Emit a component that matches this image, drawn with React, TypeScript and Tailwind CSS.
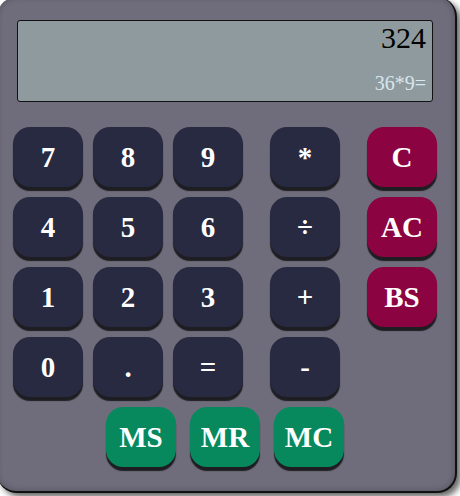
import React, { useState } from 'react';

const digitKeys = ['7', '8', '9', '4', '5', '6', '1', '2', '3', '0', '.', '='];
const opKeys = ['*', '÷', '+', '-'];
const clearKeys = ['C', 'AC', 'BS'];
const memKeys = ['MS', 'MR', 'MC'];

function Key({ label, tone }: { label: string; tone: 'dark' | 'red' | 'green' }) {
  const bg =
    tone === 'red' ? 'bg-[#8b0340]' : tone === 'green' ? 'bg-[#07895d]' : 'bg-[#272a41]';
  return (
    <button
      className={`${bg} w-[70px] h-[60px] rounded-[17px] shadow-[0_4px_1px_#1e1e22] text-white font-bold text-[29px] leading-none flex items-center justify-center font-['Liberation_Serif','Times_New_Roman',serif]`}
    >
      {label}
    </button>
  );
}

export default function App() {
  const [result] = useState('324');
  const [expr] = useState('36*9=');

  return (
    <div className="w-[460px] h-[496px] overflow-hidden bg-white">
      <div className="-ml-[3px] -mt-[3px] w-[460px] h-[496px] rounded-[20px] bg-[#6f6c7b] border-r-2 border-b-2 border-[#111] shadow-[4px_4px_6px_rgba(0,0,0,0.6),inset_0_0_6px_rgba(0,0,0,0.25)] flex flex-col font-['Liberation_Serif','Times_New_Roman',serif]">
        <div className="ml-[20px] mt-[23px] w-[416px] h-[82px] bg-[#8e9a9d] border border-[#111] rounded-[3px] flex flex-col items-end pr-[6px]">
          <div className="text-[30px] leading-[34px] text-black">{result}</div>
          <div className="mt-auto mb-[6px] text-[20px] leading-[23px] text-[#d8e6ee]">{expr}</div>
        </div>

        <div className="mt-[25px] ml-[16px] flex gap-[27px]">
          <div className="grid grid-cols-3 gap-[10px]">
            {digitKeys.map((k) => (
              <Key key={k} label={k} tone="dark" />
            ))}
          </div>
          <div className="flex flex-col gap-[10px]">
            {opKeys.map((k) => (
              <Key key={k} label={k} tone="dark" />
            ))}
          </div>
          <div className="flex flex-col gap-[10px]">
            {clearKeys.map((k) => (
              <Key key={k} label={k} tone="red" />
            ))}
          </div>
        </div>

        <div className="mt-[10px] ml-[109px] flex gap-[14px]">
          {memKeys.map((k) => (
            <Key key={k} label={k} tone="green" />
          ))}
        </div>
      </div>
    </div>
  );
}
